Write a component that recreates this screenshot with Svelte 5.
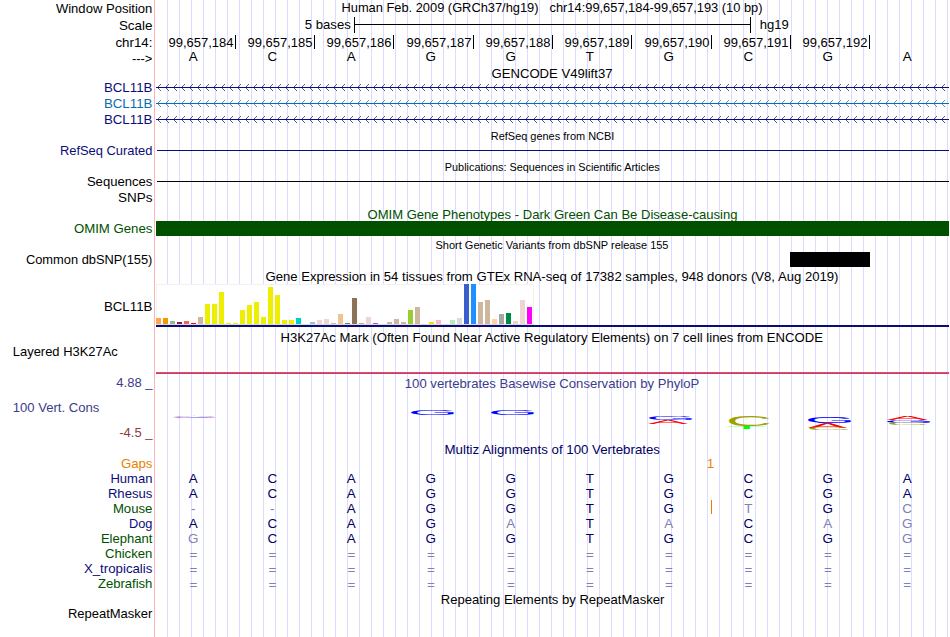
<script>
  const left = 156;
  const right = 949;

  const colX = [193.3, 272.3, 351.3, 430.8, 510.8, 589.8, 668.8, 748.3, 827.8, 907.2];
  const ticks = [235, 314, 393, 473, 552, 631, 711, 790, 869];
  const guides = Array.from({ length: 66 }, (_, i) => 167 + i * 12);
  const chevrons = Array.from({ length: 99 }, (_, i) => 157 + i * 8);

  const navy = '#0c0c78';
  const green = '#005000';

  // title: [text, first x, width, baseline]
  const tracks = [
    { kind: 'position', h: 16, label: 'Window Position', w: 96.5, base: 13 },
    { kind: 'scale', h: 18, label: 'Scale', w: 33.5, base: 30 },
    { kind: 'ruler', h: 16, label: 'chr14:', w: 37, base: 47 },
    { kind: 'bases', h: 15, label: '--->', w: 20.5, base: 63, seq: 'ACAGGTGCGA', y: 61 },
    { h: 15, title: ['GENCODE V49lift37', 491.5, 121, 78] },
    { kind: 'gene', h: 16, label: 'BCL11B', w: 48.5, base: 92, color: navy, y: 87 },
    { kind: 'gene', h: 16, label: 'BCL11B', w: 48.5, base: 108, color: '#0c6cb0', y: 103 },
    { kind: 'gene', h: 16, label: 'BCL11B', w: 48.5, base: 124, color: navy, y: 119 },
    { h: 15, small: true, title: ['RefSeq genes from NCBI', 490.8, 123.5, 140] },
    { kind: 'line', h: 16, label: 'RefSeq Curated', w: 92.5, base: 155, color: navy, y: 150 },
    { h: 15, small: true, title: ['Publications: Sequences in Scientific Articles', 444.8, 215, 171] },
    { kind: 'line', h: 16, label: 'Sequences', w: 65.5, base: 186, color: '#000', y: 181 },
    { h: 16, label: 'SNPs', w: 34.5, base: 202 },
    { h: 15, color: green, title: ['OMIM Gene Phenotypes - Dark Green Can Be Disease-causing', 367.5, 370, 219] },
    { kind: 'block', h: 16, label: 'OMIM Genes', w: 78.5, base: 233, color: green, x: left, y: 221, w2: 793 },
    { h: 14, small: true, title: ['Short Genetic Variants from dbSNP release 155', 435.5, 233, 249] },
    { kind: 'block', h: 17, label: 'Common dbSNP(155)', w: 126.5, base: 264, color: '#000', x: 790, y: 252, w2: 80 },
    { h: 16, title: ['Gene Expression in 54 tissues from GTEx RNA-seq of 17382 samples, 948 donors (V8, Aug 2019)', 265.5, 573, 281] },
    { kind: 'gtex', h: 44, label: 'BCL11B', w: 48.5, base: 311 },
    { h: 17, title: ['H3K27Ac Mark (Often Found Near Active Regulatory Elements) on 7 cell lines from ENCODE', 280.5, 542.5, 342] },
    { kind: 'h3k', h: 31, label: 'Layered H3K27Ac', w: 105, base: 356, labelX: 12.8 },
    { kind: 'cons', h: 66, color: '#3c3c8c', title: ['100 vertebrates Basewise Conservation by PhyloP', 404.8, 294.5, 388] },
    { h: 14, color: '#000064', title: ['Multiz Alignments of 100 Vertebrates', 444.5, 215.5, 454] },
    { kind: 'gaps', h: 15, label: 'Gaps', w: 31.5, base: 468, color: '#e68200' },
    ...[
      ['Human', 'ACAGGTGCGA', 'ACAGGTGCGA', navy, 42],
      ['Rhesus', 'ACAGGTGCGA', 'ACAGGTGCGA', navy, 44.5],
      ['Mouse', '--AGGTGTGC', '..AGGTG.G.', green, 39.5],
      ['Dog', 'ACAGATACAG', 'ACAG.T.C..', navy, 23.5],
      ['Elephant', 'GCAGGTGCGG', '.CAGGTGCG.', green, 51.5],
      ['Chicken', '==========', '..........', green, 47.5],
      ['X_tropicalis', '==========', '..........', navy, 68.5],
      ['Zebrafish', '==========', '..........', green, 54.5],
    ].map(([label, seq, match, color, w], i) => ({
      kind: 'bases', h: 15, label, w, seq, match, color, base: 483 + i * 15, y: 483 + i * 15,
      insert: label === 'Mouse',
    })),
    { h: 15, title: ['Repeating Elements by RepeatMasker', 440.8, 223.5, 604] },
    { h: 31, label: 'RepeatMasker', w: 84.5, base: 618 },
  ];

  let offset = 0;
  for (const t of tracks) {
    t.top = offset;
    offset += t.h;
  }

  const yellow = '#eeee00';
  const tan = '#cdb79e';
  const rose = '#eed5d2';
  const tissues = [
    [6, '#ffa54f'], [6, '#ee9a00'], [3, '#8fbc8f'], [2, '#8b1c62'], [3, '#ee6a50'], [1, '#ff0000'], [7, tan],
    [20, yellow], [20, yellow], [32, yellow], [1, yellow], [1, yellow], [14, yellow], [19, yellow],
    [22, yellow], [7, yellow], [37, yellow], [29, yellow], [4, yellow], [4, yellow],
    [6, '#00cdcd'], [0, '#ee82ee'], [2, '#9ac0cd'], [4, rose], [5, rose], [1, tan], [10, '#eec591'],
    [1, '#8b7355'], [26, '#8b7355'], [1, '#cdaa7d'], [7, rose], [1, '#b452cd'], [0, '#7a378b'],
    [2, tan], [5, tan], [2, tan], [14, '#9acd32'], [17, tan], [0, '#7a67ee'], [2, '#ffd700'],
    [4, '#ffb6c1'], [0, '#cd9b1d'], [4, '#b4eeb4'], [6, '#d9d9d9'], [40, '#3a5fcd'], [40, '#1e90ff'],
    [22, tan], [24, tan], [5, '#ffd39b'], [10, '#a6a6a6'], [11, '#008b45'], [3, rose], [24, rose],
    [17, '#ff00ff'],
  ];

  // ink box of each letter at 100px: x start, width, height, depth
  const ink = {
    A: [0.3, 66, 68.8, 0],
    C: [5, 64, 70.8, 1],
    G: [5, 66, 70.8, 1],
    T: [2, 57, 68.8, 0],
  };
  const logos = [
    ['A', 173, 416, 43, 1.2, '#ff3030'],
    ['G', 173, 417, 43, 0.8, '#5050ff'],
    ['G', 411, 410, 43, 5, '#0000ff'],
    ['G', 491, 410, 43, 5, '#0000ff'],
    ['G', 649, 416, 43, 4, '#0000ff'],
    ['A', 648, 420, 40, 4, '#ff0000'],
    ['C', 729, 416, 41, 10, '#a0a000'],
    ['T', 727, 426, 39, 3, '#00ff00'],
    ['G', 808, 416, 43, 7, '#0000ff'],
    ['A', 808, 423, 39, 5, '#ff0000'],
    ['C', 809, 428, 40, 1.9, '#a0a020'],
    ['A', 887, 416, 41, 4, '#ff0000'],
    ['G', 887, 420, 43, 3, '#0000ff'],
    ['C', 889, 423, 38, 1.9, '#a0a020'],
  ];

  function stretch([letter, x, y, w, h]) {
    const [x0, iw, ih, depth] = ink[letter];
    const sx = w / iw;
    const sy = h / ih;
    return `translate(${x - x0 * sx} ${y + h - depth * sy}) scale(${sx} ${sy})`;
  }
</script>

{#snippet line(text, x, y, w, fill = '#000')}
  <text {x} {y} {fill} textLength={w} lengthAdjust="spacingAndGlyphs">{text}</text>
{/snippet}

<main>
  {#each tracks as t}
    <svg class="track" class:small={t.small} width="950" height={t.h} viewBox="0 {t.top} 950 {t.h}">
      <g class="crisp">
        <rect x="154" y={t.top} width="1" height={t.h} fill="#ffb4b4" />
        {#each guides as x}
          <rect {x} y={t.top} width="1" height={t.h} fill="#dcdcff" />
        {/each}
      </g>

      {#if t.label}
        {@render line(t.label, t.labelX ?? 152.4 - t.w, t.base, t.w, t.color)}
      {/if}
      {#if t.title}
        {@render line(t.title[0], t.title[1], t.title[3], t.title[2], t.color)}
      {/if}

      {#if t.kind === 'position'}
        {@render line('Human Feb. 2009 (GRCh37/hg19)', 341.5, 12, 197)}
        {@render line('chr14:99,657,184-99,657,193 (10 bp)', 549.5, 12, 213)}
      {:else if t.kind === 'scale'}
        {@render line('5 bases', 304.8, 29, 46)}
        <path class="crisp" d="M354 17h1v7h395v-7h1v16h-1v-8h-395v8h-1z" />
        {@render line('hg19', 759.8, 29, 29)}
      {:else if t.kind === 'ruler'}
        {#each ticks as x, i}
          {@render line(`99,657,${184 + i}`, x - 66.5, 47, 65)}
          <rect class="crisp" {x} y="35" width="1" height="14" />
        {/each}
      {:else if t.kind === 'bases'}
        {#each t.seq as base, i}
          <text
            class="mid"
            x={colX[i]}
            y={base === '=' ? t.y + 1 : t.y}
            fill={!t.match ? '#000' : t.match[i] === base ? '#000064' : '#8080b8'}
          >{base}</text>
        {/each}
        {#if t.insert}
          <rect class="crisp" x="711" y="500" width="1" height="14" fill="#e68200" />
        {/if}
      {:else if t.kind === 'gene'}
        <g class="crisp" fill={t.color}>
          <rect x={left} y={t.y} width={right - left} height="1" />
          {#each chevrons as x}
            <path
              class="chevron"
              d="M{x + 1} {t.y - 1}h1v-1h1v-1h1v1h-1v1h-1v1h-1zM{x + 1} {t.y + 2}h1v1h1v1h1v-1h-1v-1h-1v-1h-1z"
            />
          {/each}
        </g>
      {:else if t.kind === 'line'}
        <rect class="crisp" x="157" y={t.y} width="792" height="1" fill={t.color} />
      {:else if t.kind === 'block'}
        <rect class="crisp" x={t.x} y={t.y} width={t.w2} height="15" fill={t.color} />
      {:else if t.kind === 'gtex'}
        <g class="crisp">
          <rect x="156" y="284" width="378" height="41" fill="#f2f2f2" />
          <rect x="157" y="285" width="376" height="39" fill="#fff" />
          <rect x="156" y="324" width="378" height="1" fill="#dcdcdc" />
          {#each tissues as [h, color], i}
            <rect x={156 + i * 7} y={324 - h} width="5" height={h} fill={color} />
          {/each}
          <rect x="156" y="325" width="793" height="2" fill={navy} />
        </g>
      {:else if t.kind === 'h3k'}
        <rect class="crisp" x="156" y="372" width="793" height="1" fill="#c85a78" />
        <rect class="crisp" x="156" y="373" width="793" height="1" fill="#e03264" />
      {:else if t.kind === 'cons'}
        <text class="end" x="152.5" y="387" fill="#3c3c8c">4.88 _</text>
        {@render line('100 Vert. Cons', 12.8, 412, 86.5, '#3c3c8c')}
        <text class="end" x="152.5" y="437" fill="#8c3c3c">-4.5 _</text>
        {#each logos as logo}
          <text class="logo" transform={stretch(logo)} fill={logo[5]}>{logo[0]}</text>
        {/each}
      {:else if t.kind === 'gaps'}
        <text class="mid" x="710.5" y="468" fill={t.color}>1</text>
      {/if}
    </svg>
  {/each}
</main>

<style>
  :global(body) {
    margin: 0;
    background: #fff;
    overflow: hidden;
  }
  main {
    display: flex;
    flex-direction: column;
    width: 950px;
    height: 637px;
    overflow: hidden;
    font-family: "Liberation Sans", Arial, sans-serif;
    font-size: 13.4px;
  }
  .track {
    display: block;
    flex: none;
    overflow: visible;
  }
  .small {
    font-size: 11px;
  }
  .crisp {
    shape-rendering: crispEdges;
  }
  .chevron {
    opacity: 0.7;
  }
  .end {
    text-anchor: end;
    font-size: 13px;
  }
  .mid {
    text-anchor: middle;
  }
  .logo {
    font-size: 100px;
  }
</style>
